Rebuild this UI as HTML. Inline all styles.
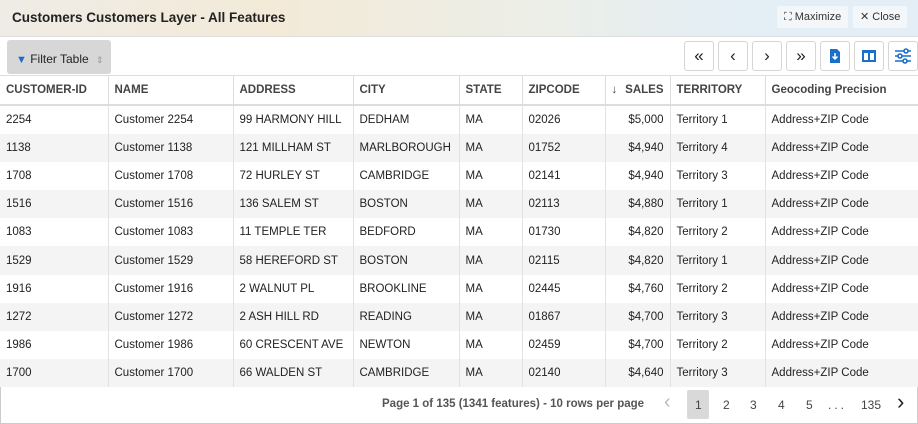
<!DOCTYPE html>
<html><head><style>
body{margin:0;width:918px;height:424px;overflow:hidden;font-family:"Liberation Sans",sans-serif;background:#fff;position:relative}
.title{position:absolute;left:0;top:0;width:918px;height:36px;background:linear-gradient(90deg,#efece6 0%,#f3ead8 30%,#eceee8 60%,#e3eef5 80%,#e3eef7 100%);border-bottom:1px solid #ddd}
.title b{position:absolute;left:12px;top:10px;font-size:13.5px;color:#222}
.tb{position:absolute;top:6px;height:22px;background:#f4f7f9;border-radius:2px;font-size:11px;color:#333;line-height:22px;padding:0 7px}
.filt{position:absolute;left:7px;top:40px;width:104px;height:34px;background:#d7d7d7;border-radius:3px;font-size:12px;color:#222;line-height:38px}
.nb{position:absolute;top:41px;width:28px;height:28px;border:1px solid #d6d6d6;border-radius:3px;background:#fff;text-align:center;line-height:27px;font-size:17px;color:#222}
table{position:absolute;left:0;top:75px;border-collapse:collapse;font-size:11.5px;color:#222;table-layout:fixed;width:918px}
th{height:28px;text-align:left;font-weight:bold;color:#444;border:1px solid #ddd;border-bottom:2px solid #ddd;padding:0 6px;font-size:11.5px;white-space:nowrap}
td{height:28.1px;padding:0 6px;border-left:1px solid #e2e2e2;white-space:nowrap;overflow:hidden}
tr:nth-child(odd) td{background:#f4f4f4}
.foot{position:absolute;left:0;top:387px;width:916px;height:36px;border:1px solid #ccc;border-top:none;font-size:12px;color:#444}
.foot span{position:absolute;top:11px}
</style></head><body>
<div class="title"><b>Customers Customers Layer - All Features</b>
<div class="tb" style="left:777px">⛶ Maximize</div>
<div class="tb" style="left:853px">✕ Close</div></div>
<div class="filt"><span style="color:#1a6fc9;margin-left:9px;font-size:11px">▼</span> Filter Table <span style="color:#999;font-size:9px;margin-left:4px">⇕</span></div>
<div class="nb" style="left:684px">«</div>
<div class="nb" style="left:718px">‹</div>
<div class="nb" style="left:752px">›</div>
<div class="nb" style="left:786px">»</div>
<div class="nb" style="left:820px"><svg width="14" height="16" viewBox="0 0 14 16" style="margin-top:6px"><path d="M2 1h7l3 3v11H2z" fill="#1a6fc9"/><path d="M7 5v6M4.5 8.5L7 11l2.5-2.5" stroke="#fff" stroke-width="1.5" fill="none"/></svg></div>
<div class="nb" style="left:854px"><svg width="16" height="14" viewBox="0 0 16 14" style="margin-top:7px"><rect x="1" y="1" width="14" height="12" fill="#1a6fc9"/><rect x="3" y="4" width="4" height="7" fill="#fff"/><rect x="9" y="4" width="4" height="7" fill="#fff"/></svg></div>
<div class="nb" style="left:888px;width:28px"><svg width="18" height="16" viewBox="0 0 18 16" style="margin-top:6px" stroke="#1a6fc9" stroke-width="1.6" fill="#fff"><path d="M1 3h16M1 8h16M1 13h16"/><circle cx="12" cy="3" r="2"/><circle cx="6" cy="8" r="2"/><circle cx="11" cy="13" r="2"/></svg></div>
<table>
<colgroup><col style="width:108px"><col style="width:125px"><col style="width:120px"><col style="width:106px"><col style="width:63px"><col style="width:83px"><col style="width:65px"><col style="width:95px"><col style="width:153px"></colgroup>
<tr><th style="border-left:none">CUSTOMER-ID</th><th>NAME</th><th>ADDRESS</th><th>CITY</th><th>STATE</th><th>ZIPCODE</th><th style="text-align:right"><span style="float:left;font-weight:normal">↓</span>SALES</th><th>TERRITORY</th><th>Geocoding Precision</th></tr>
<tr><td style="border:none">2254</td><td>Customer 2254</td><td>99 HARMONY HILL</td><td>DEDHAM</td><td>MA</td><td>02026</td><td style="text-align:right">$5,000</td><td>Territory 1</td><td>Address+ZIP Code</td></tr>
<tr><td style="border:none">1138</td><td>Customer 1138</td><td>121 MILLHAM ST</td><td>MARLBOROUGH</td><td>MA</td><td>01752</td><td style="text-align:right">$4,940</td><td>Territory 4</td><td>Address+ZIP Code</td></tr>
<tr><td style="border:none">1708</td><td>Customer 1708</td><td>72 HURLEY ST</td><td>CAMBRIDGE</td><td>MA</td><td>02141</td><td style="text-align:right">$4,940</td><td>Territory 3</td><td>Address+ZIP Code</td></tr>
<tr><td style="border:none">1516</td><td>Customer 1516</td><td>136 SALEM ST</td><td>BOSTON</td><td>MA</td><td>02113</td><td style="text-align:right">$4,880</td><td>Territory 1</td><td>Address+ZIP Code</td></tr>
<tr><td style="border:none">1083</td><td>Customer 1083</td><td>11 TEMPLE TER</td><td>BEDFORD</td><td>MA</td><td>01730</td><td style="text-align:right">$4,820</td><td>Territory 2</td><td>Address+ZIP Code</td></tr>
<tr><td style="border:none">1529</td><td>Customer 1529</td><td>58 HEREFORD ST</td><td>BOSTON</td><td>MA</td><td>02115</td><td style="text-align:right">$4,820</td><td>Territory 1</td><td>Address+ZIP Code</td></tr>
<tr><td style="border:none">1916</td><td>Customer 1916</td><td>2 WALNUT PL</td><td>BROOKLINE</td><td>MA</td><td>02445</td><td style="text-align:right">$4,760</td><td>Territory 2</td><td>Address+ZIP Code</td></tr>
<tr><td style="border:none">1272</td><td>Customer 1272</td><td>2 ASH HILL RD</td><td>READING</td><td>MA</td><td>01867</td><td style="text-align:right">$4,700</td><td>Territory 3</td><td>Address+ZIP Code</td></tr>
<tr><td style="border:none">1986</td><td>Customer 1986</td><td>60 CRESCENT AVE</td><td>NEWTON</td><td>MA</td><td>02459</td><td style="text-align:right">$4,700</td><td>Territory 2</td><td>Address+ZIP Code</td></tr>
<tr><td style="border:none">1700</td><td>Customer 1700</td><td>66 WALDEN ST</td><td>CAMBRIDGE</td><td>MA</td><td>02140</td><td style="text-align:right">$4,640</td><td>Territory 3</td><td>Address+ZIP Code</td></tr>
</table>
<div class="foot">
<span style="left:381px;font-weight:bold;color:#555;font-size:11.5px">Page 1 of 135 (1341 features) - 10 rows per page</span>
<span style="left:663px;color:#bbb;font-size:20px;top:4px">‹</span>
<div style="position:absolute;left:686px;top:3px;width:22px;height:29px;background:#d9d9d9;border-radius:2px"></div>
<span style="left:694px">1</span><span style="left:722px">2</span><span style="left:749px">3</span><span style="left:777px">4</span><span style="left:805px">5</span><span style="left:827px;letter-spacing:3px">...</span><span style="left:860px">135</span>
<span style="left:896px;font-size:22px;top:2px;color:#222">›</span>
</div>
</body></html>
